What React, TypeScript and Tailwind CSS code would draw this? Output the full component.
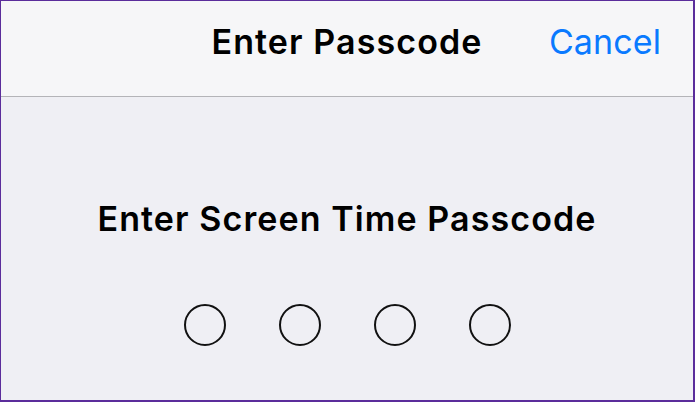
import React from "react";

export default function App() {
  const font = { fontFamily: "Inter, 'Liberation Sans', sans-serif" };
  return (
    <div
      className="w-[695px] h-[402px] flex flex-col bg-[#efeff4] border-t border-l border-r-2 border-b-2 border-[#5b2d9b] overflow-hidden"
      style={font}
    >
      <div className="h-[96px] shrink-0 bg-[#f6f6f8] border-b border-[#b4b4b8] relative flex items-start justify-center pt-[24px]">
        <span className="text-[34px] font-semibold text-black tracking-[1.1px] leading-none">
          Enter Passcode
        </span>
        <span className="absolute right-[32px] top-[24px] text-[34px] text-[#0a7aff] leading-none tracking-[0.1px]">
          Cancel
        </span>
      </div>
      <div className="flex-1 flex flex-col items-center">
        <div className="mt-[105px] text-[34px] font-semibold text-black leading-none tracking-[1.1px]">
          Enter Screen Time Passcode
        </div>
        <div className="mt-[68px] flex gap-[53px]">
          {[0, 1, 2, 3].map((i) => (
            <div key={i} className="w-[42px] h-[42px] rounded-full border-2 border-[#111]" />
          ))}
        </div>
      </div>
    </div>
  );
}
